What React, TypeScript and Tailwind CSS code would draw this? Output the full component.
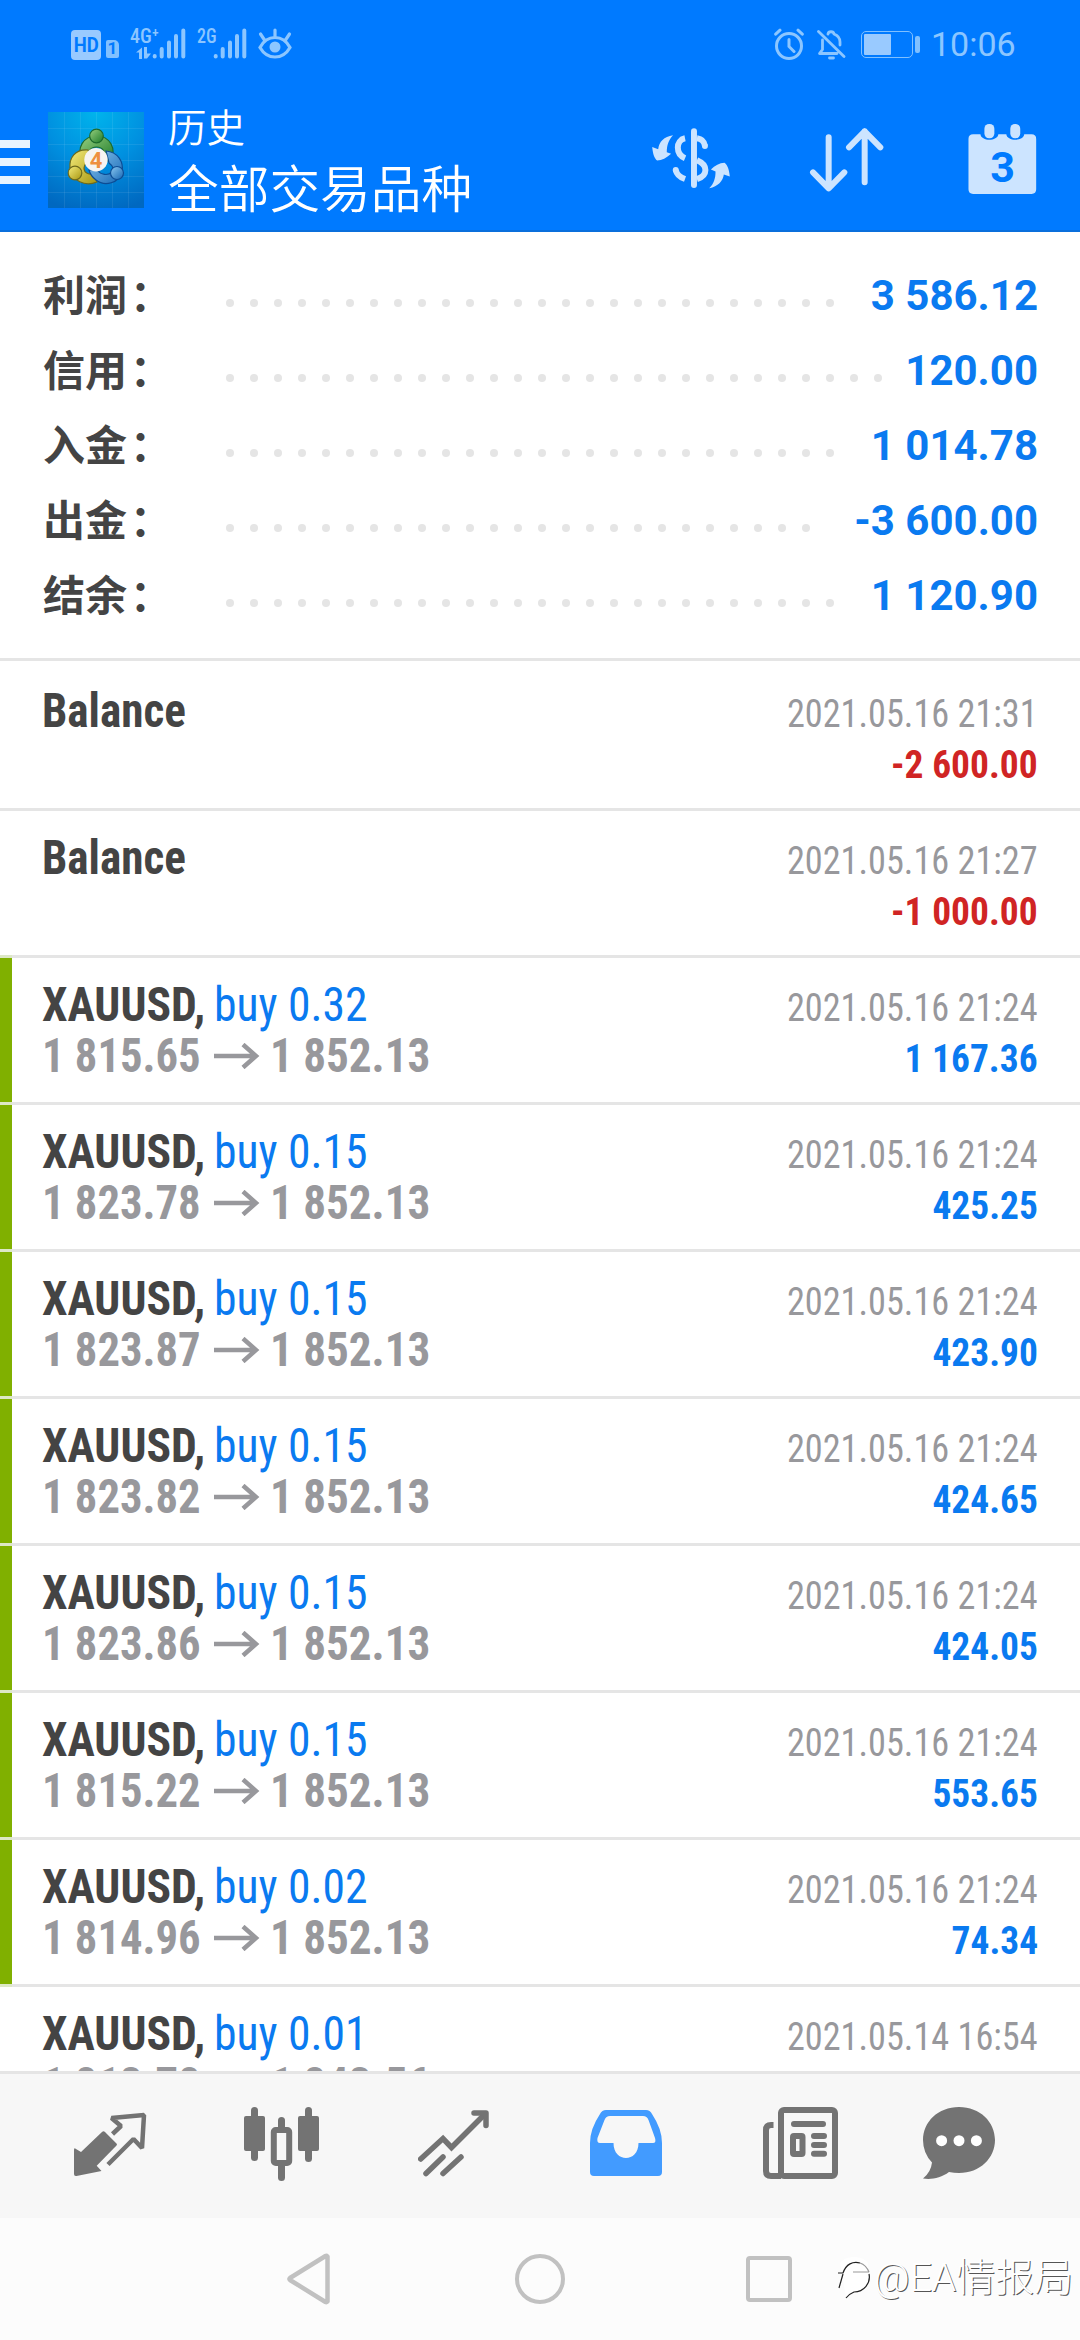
import type { ReactNode } from "react"

const summary = [
  { label: "利润", value: "3 586.12", dots: 26 },
  { label: "信用", value: "120.00", dots: 28 },
  { label: "入金", value: "1 014.78", dots: 26 },
  { label: "出金", value: "-3 600.00", dots: 25 },
  { label: "结余", value: "1 120.90", dots: 26 },
]

type Deal = {
  symbol: string
  time: string
  profit: string
  volume?: string
  open?: string
  close?: string
  marked?: boolean
}

const deals: Deal[] = [
  { symbol: "Balance", time: "2021.05.16 21:31", profit: "-2 600.00" },
  { symbol: "Balance", time: "2021.05.16 21:27", profit: "-1 000.00" },
  { symbol: "XAUUSD,", volume: "buy 0.32", open: "1 815.65", close: "1 852.13", time: "2021.05.16 21:24", profit: "1 167.36", marked: true },
  { symbol: "XAUUSD,", volume: "buy 0.15", open: "1 823.78", close: "1 852.13", time: "2021.05.16 21:24", profit: "425.25", marked: true },
  { symbol: "XAUUSD,", volume: "buy 0.15", open: "1 823.87", close: "1 852.13", time: "2021.05.16 21:24", profit: "423.90", marked: true },
  { symbol: "XAUUSD,", volume: "buy 0.15", open: "1 823.82", close: "1 852.13", time: "2021.05.16 21:24", profit: "424.65", marked: true },
  { symbol: "XAUUSD,", volume: "buy 0.15", open: "1 823.86", close: "1 852.13", time: "2021.05.16 21:24", profit: "424.05", marked: true },
  { symbol: "XAUUSD,", volume: "buy 0.15", open: "1 815.22", close: "1 852.13", time: "2021.05.16 21:24", profit: "553.65", marked: true },
  { symbol: "XAUUSD,", volume: "buy 0.02", open: "1 814.96", close: "1 852.13", time: "2021.05.16 21:24", profit: "74.34", marked: true },
  { symbol: "XAUUSD,", volume: "buy 0.01", open: "1 813.78", close: "1 843.56", time: "2021.05.14 16:54", profit: "29.78" },
]

function SignalBars() {
  return (
    <svg width="34" height="32" viewBox="0 0 34 32" stroke="currentColor" strokeWidth="4" strokeLinecap="round">
      <path d="M2.7 28v.5M9.7 21v7.5M17 14.5v14M24 8v20.5M31.3 2.5v26" />
    </svg>
  )
}

function StatusBar() {
  return (
    <div className="flex h-[88px] items-center justify-between pl-[71px] pr-[66px] text-[#8cc6ff]">
      <div className="flex items-center">
        <div className="mt-[2px] flex h-[30px] w-[30px] items-center justify-center rounded-[4px] bg-[#99caff]">
          <span className="text-[21px] leading-none font-bold text-[#007aff] [font-family:Roboto,sans-serif] scale-x-88">HD</span>
        </div>
        <div className="mt-[9px] ml-[5px] flex h-[18px] w-[13px] items-center justify-center rounded-[2px] rounded-tr-[5px] bg-[#80c0ff]">
          <span className="text-[17px] leading-none font-bold text-[#007aff] [font-family:Roboto,sans-serif]">1</span>
        </div>
        <div className="relative ml-[11px] h-[32px] w-[22px]">
          <span className="absolute top-0 left-0 text-[20px] leading-[16px] font-medium whitespace-nowrap [font-family:'Roboto_Condensed',Roboto,sans-serif]">4G⁺</span>
          <svg className="absolute top-[19px] left-[6px]" width="15" height="12" viewBox="0 0 15 12" fill="currentColor">
            <path d="M6 .5V12H3V5.500H0zM8 0h3v6.500h4l-4 5H8z" />
          </svg>
        </div>
        <SignalBars />
        <div className="relative ml-[11px] h-[32px] w-[16px]">
          <span className="absolute top-0 left-0 origin-left scale-x-90 text-[20px] leading-[16px] font-medium whitespace-nowrap [font-family:'Roboto_Condensed',Roboto,sans-serif]">2G</span>
        </div>
        <SignalBars />
        <svg className="ml-[11px]" width="34" height="32" viewBox="0 0 34 32" fill="none" stroke="currentColor" strokeWidth="3.200" strokeLinecap="round">
          <path d="M2 19.500C6 12 11 9.500 17 9.500S28 12 32 19.500C28 26.500 23 29 17 29S6 26.500 2 19.500z" />
          <path d="M17 2v6M2.500 6l4 6M31.500 6l-4 6" />
          <circle cx="17" cy="19" r="5.500" fill="currentColor" stroke="none" />
        </svg>
      </div>
      <div className="flex items-center">
        <svg width="30" height="32" viewBox="0 0 30 32" fill="none" stroke="currentColor" strokeWidth="3" strokeLinecap="round">
          <circle cx="15" cy="18" r="12.500" />
          <path d="M15 11.500v7l5 5M1.700 6.200l4.300-4M28.300 6.200l-4.300-4" />
        </svg>
        <svg className="ml-[13px]" width="29" height="32" viewBox="0 0 29 32" fill="none" stroke="currentColor" strokeWidth="2.800" strokeLinecap="round" strokeLinejoin="round">
          <path d="M1.500 3.500l25.500 25M20 25.500H2.500l3-4V12M11 6c.5-3 5.500-3 6 0 4 1.500 6 4 6 8v3" />
          <path d="M12.500 30h4" />
        </svg>
        <div className="mt-px ml-[15px] flex h-[27px] w-[52px] rounded-[5px] border-[1.500px] border-[#80c0ff] p-[2px]">
          <div className="w-[27px] rounded-[1px] bg-[#99caff]" />
        </div>
        <div className="mt-px ml-[2px] h-[17px] w-[5px] rounded-[2px] bg-[#80c0ff]" />
        <span className="ml-[11px] w-[83px] text-[34px] leading-[40px] whitespace-nowrap [font-family:Roboto,sans-serif]">10:06</span>
      </div>
    </div>
  )
}

function AppLogo() {
  return (
    <svg width="96" height="96" viewBox="0 0 96 96">
      <defs>
        <radialGradient id="logoBg" cx="0.5" cy="0" r="1.050">
          <stop offset="0" stopColor="#00b4ec" />
          <stop offset="0.5" stopColor="#0090e0" />
          <stop offset="1" stopColor="#0068c0" />
        </radialGradient>
        <linearGradient id="green" x1="0" y1="0" x2="1" y2="1">
          <stop offset="0" stopColor="#98d080" />
          <stop offset="1" stopColor="#1c7a28" />
        </linearGradient>
        <linearGradient id="yellow" x1="0" y1="0" x2="1" y2="1">
          <stop offset="0" stopColor="#f4ec7c" />
          <stop offset="1" stopColor="#a89610" />
        </linearGradient>
        <linearGradient id="blue" x1="0" y1="0" x2="1" y2="1">
          <stop offset="0" stopColor="#8cc8f0" />
          <stop offset="1" stopColor="#1466b4" />
        </linearGradient>
      </defs>
      <rect width="96" height="96" fill="url(#logoBg)" />
      <path
        d="M0 16.500h96M0 32.500h96M0 48.500h96M0 64.500h96M0 80.500h96M16.500 0v96M32.500 0v96M48.500 0v96M64.500 0v96M80.500 0v96"
        stroke="#fff"
        strokeOpacity="0.08"
      />
      <g strokeWidth="1.200">
        <path d="M35 49C27 36 36 24 48.500 24S70 36 62 50l-7-3c3-7 0-12-6.500-12s-9 5-6 11z" fill="url(#green)" stroke="#1d6a2c" />
        <path d="M40 38c-13-1-19 8-18 18 2 13 15 19 27 14l-3-8c-5 1-10-1-10-6 0-4 3-6 8-7z" fill="url(#yellow)" stroke="#6e6a1c" />
        <path d="M58 39c12 1 18 11 16 21-3 11-17 15-26 8-4-3-6-6-7-10l8 0c4 5 11 6 15 2 2-3 1-6-3-9z" fill="url(#blue)" stroke="#0d4c94" />
        <circle cx="48.500" cy="24" r="6.800" fill="url(#green)" stroke="#1d6a2c" />
        <circle cx="27" cy="61" r="6.800" fill="url(#yellow)" stroke="#6e6a1c" />
        <circle cx="69" cy="61" r="6.500" fill="url(#blue)" stroke="#0d4c94" />
      </g>
      <circle cx="48" cy="47.700" r="11.700" fill="#f6f4f2" />
      <text x="48" y="55.500" textAnchor="middle" fontFamily="Roboto, sans-serif" fontWeight="700" fontSize="22" fill="#ee9040">
        4
      </text>
    </svg>
  )
}

function Header() {
  return (
    <header className="flex h-[232px] flex-col border-b-2 border-[#0a6fdc] bg-[#007aff]">
      <StatusBar />
      <div className="flex h-[142px] items-start">
        <div className="mt-[52px] flex w-[30px] flex-col gap-[10px]">
          <div className="h-[8px] bg-[#e8f4ff]" />
          <div className="h-[8px] bg-[#e8f4ff]" />
          <div className="h-[8px] bg-[#e8f4ff]" />
        </div>
        <div className="mt-[24px] ml-[18px]">
          <AppLogo />
        </div>
        <div className="ml-[24px] flex-1 font-[350] text-white [font-family:'Noto_Sans_CJK_SC',sans-serif]">
          <div className="mt-[12px] text-[38.500px] leading-[50px]">历史</div>
          <div className="mt-[3px] text-[50.700px] leading-[66px] whitespace-nowrap">全部交易品种</div>
        </div>
        <div className="mt-[35px] flex items-start pr-[43px] text-[#cce4ff]">
          <svg className="mt-[4px]" width="80" height="63" viewBox="30 50 240 190" fill="none" stroke="currentColor" strokeWidth="18">
            <path d="M159 63v162" strokeLinecap="round" />
            <path d="M132 84C103 90 103 132 132 144M104 180c3 14 14 22 28 27" />
            <path d="M168 84c14 2 22 9 24 23M168 150c34 14 34 46 0 57" />
            <g strokeLinecap="round">
              <path d="M104 180v0M192 107v0" />
            </g>
            <g fill="currentColor" stroke="none">
              <path d="M96 75C68 80 54 94 51 117L33 110C35 132 40 144 48 151C62 151 76 144 90 131L77 126C77 105 82 90 96 75z" />
              <path d="M205 235C232 228 246 214 249 193L267 199C265 178 261 166 251 158C236 159 222 166 210 178L224 184C224 205 219 220 205 235z" />
            </g>
          </svg>
          <svg className="mt-[4px] ml-[78px]" width="75" height="65" viewBox="505 50 225 195" fill="none" stroke="currentColor" strokeWidth="18" strokeLinecap="round" strokeLinejoin="round">
            <path d="M564 81v152M517 186l47 48 47-48M672 216V63M625 111l47-48 47 48" />
          </svg>
          <svg className="ml-[83px]" width="70" height="73" viewBox="980 38 210 220">
            <path
              d="M998 72H1020C1022 94 1072 94 1074 72H1098C1100 94 1150 94 1152 72H1174Q1188 72 1188 86V238Q1188 252 1174 252H998Q984 252 984 238V86Q984 72 998 72z"
              fill="currentColor"
            />
            <rect x="1032" y="41" width="30" height="43" rx="14" fill="currentColor" />
            <rect x="1110" y="41" width="30" height="43" rx="14" fill="currentColor" />
            <text x="1087" y="215" textAnchor="middle" fontFamily="Roboto, sans-serif" fontWeight="700" fontSize="130" fill="#007aff">
              3
            </text>
          </svg>
        </div>
      </div>
    </header>
  )
}

function Summary() {
  return (
    <section className="flex h-[429px] flex-col border-b-[3px] border-[#e5e5e5] pt-[26px]">
      {summary.map((item) => (
        <div key={item.label} className="flex h-[75px] items-center pr-[42px] pl-[43px]">
          <div className="flex w-[183px] pb-[5px] text-[42px] leading-none font-bold text-[#444] [font-family:'Noto_Sans_CJK_SC',sans-serif]">
            <span>{item.label}</span>
            <span className="ml-[3px]">：</span>
          </div>
          <div className="mt-[15px] flex h-[8px] flex-1 gap-[16px]">
            {Array.from({ length: item.dots }, (_, i) => (
              <i key={i} className="h-[8px] w-[8px] shrink-0 rounded-full bg-[#e5e5e5]" />
            ))}
          </div>
          <span className="text-[42px] leading-[75px] font-bold whitespace-nowrap text-[#0a7af0] [font-family:Roboto,sans-serif]">{item.value}</span>
        </div>
      ))}
    </section>
  )
}

function DealRow({ deal, nextMarked }: { deal: Deal; nextMarked?: boolean }) {
  return (
    <div className="h-[147px] shrink-0">
      <div className="flex h-[144px] [font-family:'Roboto_Condensed',Roboto,sans-serif]">
        <div className={deal.marked ? "w-[12px] bg-[#80b000]" : "w-[12px]"} />
        <div className="flex flex-1 justify-between pr-[42px] pl-[30px]">
          <div className="pt-[21px] text-[48px] leading-[51px] whitespace-nowrap">
            <div className="flex">
              <span className={deal.volume ? "w-[172px] origin-left scale-x-95 font-bold text-[#444]" : "origin-left scale-x-94 font-bold text-[#444]"}>
                {deal.symbol}
              </span>
              {deal.volume && <span className="origin-left scale-x-95 text-[#0a7af0]">{deal.volume}</span>}
            </div>
            {deal.open && (
              <div className="flex font-bold text-[#98989c]">
                <span className="w-[172px] origin-left scale-x-93">{deal.open}</span>
                <svg className="mt-[13px] mr-[10px]" width="46" height="26" viewBox="0 0 46 26" fill="none" stroke="currentColor" strokeWidth="4.500">
                  <path d="M0 13h42M29 1.500l13 11.500-13 11.500" />
                </svg>
                <span className="origin-left scale-x-94">{deal.close}</span>
              </div>
            )}
          </div>
          <div className="flex flex-col items-end pt-[25px] text-[39px] leading-[51px] whitespace-nowrap">
            <span className="origin-right scale-x-93 text-[#98989c]">{deal.time}</span>
            <span className={deal.profit.startsWith("-") ? "origin-right scale-x-96 font-bold text-[#d02424]" : "origin-right scale-x-96 font-bold text-[#0a7af0]"}>
              {deal.profit}
            </span>
          </div>
        </div>
      </div>
      <div className="flex h-[3px] bg-[#e5e5e5]">
        {(deal.marked || nextMarked) && <div className="w-[12px] bg-[#dde8c6]" />}
      </div>
    </div>
  )
}

function Tab({ className, children }: { className: string; children: ReactNode }) {
  return (
    <div className={className}>
      <svg width="76" height="76" viewBox="0 0 76 76" fill="none">
        {children}
      </svg>
    </div>
  )
}

function TabBar() {
  return (
    <nav className="flex h-[147px] items-start border-t-[3px] border-[#e5e5e5] bg-[#f7f7f7] pt-[33px] text-[#737373]">
      <Tab className="ml-[74px]">
        <path d="M0 43q0-3 2-1L7 45 28 25q1.500-1.500 3 0L42.500 36.500q1 1 0 2L22.700 58.700 27.500 64 2.500 69Q0 69.500 0 67z" fill="currentColor" />
        <path d="M38.500 27L47 19 37.500 11 70 8 68 41 59.500 32 34 57.500" stroke="currentColor" strokeWidth="4.500" strokeLinejoin="bevel" />
      </Tab>
      <Tab className="ml-[94px]">
        <g fill="currentColor">
          <rect y="9" width="21" height="35" rx="2" />
          <rect x="7" width="7" height="54" rx="3.500" />
          <rect x="54" y="9" width="21" height="35" rx="2" />
          <rect x="61" width="7" height="55" rx="3.500" />
          <rect x="34" y="10" width="7" height="14" rx="3.500" />
          <rect x="34" y="54" width="7" height="20" rx="3.500" />
        </g>
        <rect x="29.800" y="23" width="15.400" height="33" rx="2" stroke="currentColor" strokeWidth="6" />
      </Tab>
      <Tab className="ml-[98px]">
        <g stroke="currentColor" strokeWidth="5.500" strokeLinecap="round">
          <path d="M2.700 52L25 31.500 33.500 40.500 67 7" />
          <path d="M56 6H68V18.500" strokeLinejoin="round" />
          <path d="M8 66.500L25 50M25 66.500L43 50" />
        </g>
      </Tab>
      <Tab className="ml-[96px]">
        <path
          fill="#429bff"
          fillRule="evenodd"
          d="M16 3H56Q60 3 62 7Q72 22 72 36V65Q72 69 68 69H4Q0 69 0 65V36Q0 22 10 7Q12 3 16 3zM20 9Q16 9 14.500 13L7.500 31Q6.500 36 10 36H23.500C23.500 56 48.500 56 48.500 36H63Q66.500 36 65 31L58.500 13Q57 9 53 9z"
        />
      </Tab>
      <Tab className="ml-[97px]">
        <g stroke="currentColor" strokeWidth="6">
          <rect x="18" y="3" width="54" height="66" rx="3" />
          <path d="M10.500 18H8q-5 0-5 5v41q0 5 5 5h10" />
          <path d="M31 17h29M51 29h10M51 38h10M51 46.700h10" strokeLinecap="round" />
          <rect x="30" y="29" width="9.500" height="18" rx="1" />
        </g>
      </Tab>
      <Tab className="ml-[84px]">
        <path d="M36 0C57 0 72 15 72 33S57 66 36 66Q31 66 26 65C18 71 8 73 0 71.500Q8 65 9 55.500Q0 46 0 33C0 15 15 0 36 0z" fill="currentColor" />
        <g fill="#fff">
          <circle cx="18.600" cy="33.700" r="5.500" />
          <circle cx="36" cy="33.700" r="5.500" />
          <circle cx="53.400" cy="33.700" r="5.500" />
        </g>
      </Tab>
    </nav>
  )
}

function SystemNav() {
  return (
    <div className="relative flex h-[122px] items-center bg-[#fcfcfc] text-[#c1c1c1]">
      <svg className="ml-[286px]" width="45" height="52" viewBox="0 0 45 52" fill="none" stroke="currentColor" strokeWidth="4.500" strokeLinejoin="round">
        <path d="M41.500 3.500v45q-1 1-2 .5L4 27q-1-1 0-2L39.500 3q1-.5 2 .5z" />
      </svg>
      <div className="ml-[184px] h-[50px] w-[50px] rounded-full border-[4.500px] border-[#c1c1c1]" />
      <div className="ml-[181px] h-[46px] w-[46px] rounded-[4px] border-[4.500px] border-[#c1c1c1]" />
      <div className="absolute top-[37px] left-[836px] flex items-center whitespace-nowrap text-white">
        <svg width="36" height="46" viewBox="0 0 36 46" fill="none">
          <path d="M4 8C10 0 26 0 32 8V28C28 36 20 36 10 42z" fill="#fff" />
          <g stroke="#222" strokeWidth="1.200">
            <path d="M2 18h5C10 9 17 6 24 8" />
            <path d="M7 19L3 33" />
            <path d="M33 19C35 28 28 37 18 37Q13 39 10 43" />
            <path d="M17 17h16M24 8q6 2 9 9" stroke="#999" />
          </g>
        </svg>
        <span className="ml-[2px] text-[39px] leading-[46px] font-light [font-family:Roboto,'Noto_Sans_CJK_SC',sans-serif] [text-shadow:1px_1px_0_#555]">@EA情报局</span>
      </div>
    </div>
  )
}

export default function App() {
  return (
    <div className="flex h-[2340px] w-[1080px] flex-col overflow-hidden bg-white">
      <Header />
      <Summary />
      <main className="flex h-[1410px] flex-col overflow-hidden pt-[3px]">
        {deals.map((deal, i) => (
          <DealRow key={i} deal={deal} nextMarked={deals[i + 1]?.marked} />
        ))}
      </main>
      <TabBar />
      <SystemNav />
    </div>
  )
}
